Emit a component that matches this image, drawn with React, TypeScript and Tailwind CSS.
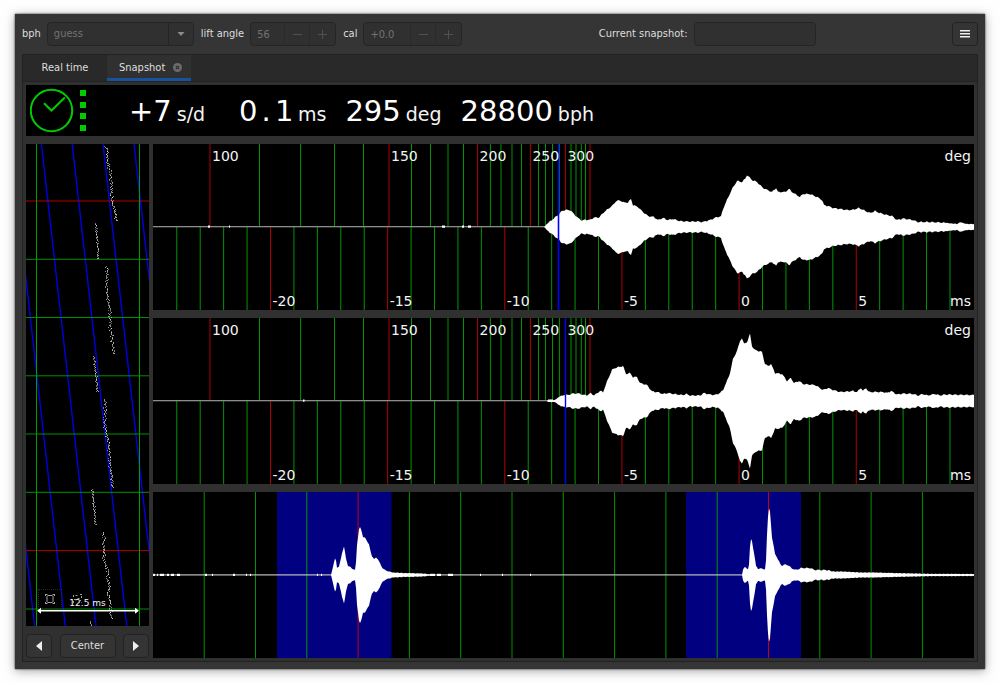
import React from "react";

type Point = [number, number];

const GREEN = "#009600";
const RED = "#b40000";
const CHART_W = 821;
const CHART_H = 166;
const MID = 83;
const ORIGIN = 153;

const degreeTicks: { x: number; label?: string; major?: boolean }[] = [
  { x: 210, label: "100", major: true },
  { x: 259.5 }, { x: 300.6 }, { x: 334.5 }, { x: 363.5 },
  { x: 389, label: "150", major: true },
  { x: 411.5 }, { x: 430.5 }, { x: 448 }, { x: 463.5 },
  { x: 477.6, label: "200", major: true },
  { x: 490.4 }, { x: 501 }, { x: 512 }, { x: 521.5 },
  { x: 530.4, label: "250", major: true },
  { x: 538.5 }, { x: 545.5 }, { x: 552.5 }, { x: 559.4 },
  { x: 565.4, label: "300", major: true },
  { x: 571 }, { x: 576 }, { x: 581.3 }, { x: 585.5 },
  { x: 590, major: true },
];

const msTicks = Array.from({ length: 34 }, (_, i) => {
  const ms = i - 24;
  return { ms, x: 739.1 + ms * 23.43, major: ms % 5 === 0 };
});

const tickEnvelope: Point[] = [
  [544, 0], [547, 3], [553, 8], [558, 12], [562, 16], [565, 17], [570, 17], [574, 13], [578, 9], [582, 6.5],
  [585, 7.3], [590, 7], [594, 9.5], [599, 9.5], [603, 14], [608, 18], [613, 22], [616, 26], [620, 26.5],
  [624, 24.5], [628, 24.5], [631, 28], [633, 22], [638, 20], [643, 15], [648, 11], [654, 10], [658, 7],
  [663, 9], [668, 7], [673, 8], [680, 6], [687, 5.5], [697, 5.5], [703, 5], [710, 7], [717, 10], [721, 10.5],
  [723, 18], [727, 27], [732, 38], [737, 46], [742, 45], [745, 48], [747, 52], [752, 47], [757, 45],
  [763, 39], [772, 35], [776, 39], [778, 35], [785, 35], [789, 38], [792, 35], [800, 30], [803, 33],
  [810, 33], [817, 30], [822, 27], [824, 22], [828, 21], [833, 19], [847, 17], [852, 17], [859, 19],
  [870, 14], [875, 16], [880, 14], [887, 12], [892, 11], [897, 7], [903, 8.5], [913, 7], [918, 5],
  [927, 5], [940, 4.5], [947, 4], [957, 3], [960, 4.5], [967, 3], [974, 3],
];

const tockEnvelope: Point[] = [
  [547, 0], [548, 1], [555, 1], [558, 3.5], [565, 6.5], [568, 6], [573, 7.5], [580, 7.5], [583, 6], [588, 6],
  [591, 8], [594, 5.5], [600, 10], [603, 9], [605, 14], [608, 22], [612, 31], [615, 33], [623, 35], [626, 27],
  [630, 28], [633, 24], [637, 24], [640, 18], [647, 16], [652, 9.5], [657, 9], [663, 7], [668, 8], [677, 6.5],
  [683, 6], [686, 7], [690, 5.5], [700, 5.5], [704, 8], [710, 6.5], [715, 6], [720, 8], [723, 11], [727, 20],
  [730, 28], [733, 42], [736, 48], [738, 53], [740, 60], [742, 63], [744, 57], [747, 59], [750, 67],
  [752, 55], [755, 51], [762, 49], [765, 37], [768, 35], [771, 37], [775, 28], [782, 27], [787, 20],
  [791, 23], [794, 18], [799, 20], [803, 17], [815, 16], [823, 11], [828, 13], [833, 11], [840, 9],
  [853, 10], [857, 9], [861, 13], [863, 10], [866, 13], [869, 9], [883, 9], [887, 8], [891, 10], [897, 6.5],
  [903, 7.5], [913, 7], [918, 5.5], [923, 7], [927, 5.5], [935, 7], [940, 5.5], [945, 6.5], [974, 6],
];

const beatEnvelopes: Point[][] = [
  [
    [331, 0], [333, 8], [335, 17], [336, 15], [337, 7], [339, 8], [342, 22], [344, 28], [346, 17], [348, 9],
    [355, 5], [356, 12], [357, 30], [359, 46], [360, 48], [362, 42], [363, 38], [365, 38], [367, 33],
    [369, 31], [372, 18], [374, 16], [376, 18], [380, 12], [383, 6], [387, 4], [393, 2.5], [403, 2],
    [423, 1.5], [430, 0.6],
  ],
  [
    [742, 0], [743, 5], [745, 8], [748, 6], [749, 10], [750, 28], [751, 36], [752, 34], [754, 22], [756, 9],
    [758, 6.5], [765, 6], [766, 14], [767, 40], [768, 58], [769, 67], [770, 64], [771, 50], [772, 37],
    [775, 22], [778, 15], [782, 9], [786, 11], [790, 8], [795, 5], [802, 7], [810, 7], [815, 5], [827, 5],
    [833, 3.5], [843, 3.5], [860, 2.5], [873, 2.5], [900, 1.8], [927, 1.2], [974, 1],
  ],
];

function heightAt(points: Point[], x: number): number {
  for (let i = 1; i < points.length; i++) {
    const [x0, h0] = points[i - 1];
    const [x1, h1] = points[i];
    if (x <= x1) return h0 + ((h1 - h0) * (x - x0)) / (x1 - x0);
  }
  return points[points.length - 1][1];
}

/** Closed outline mirrored about the centre line, with a fine ripple on its edge. */
function wavePath(points: Point[], ripple: number): string {
  const top: string[] = [];
  const bottom: string[] = [];
  const end = points[points.length - 1][0];
  for (let x = points[0][0]; x <= end; x += 1) {
    const h = heightAt(points, x);
    const r = h > 4 ? ripple * (Math.sin(x * 1.1) + 0.4 * Math.sin(x * 2.3)) : ripple * 0.4 * Math.sin(x * 1.6);
    const y = Math.max(0, h + (h > 0.9 ? r : 0));
    top.push(`${x - ORIGIN},${(MID - y).toFixed(2)}`);
    bottom.unshift(`${x - ORIGIN},${(MID + y).toFixed(2)}`);
  }
  return `M${top.join("L")}L${bottom.join("L")}Z`;
}

function BeatChart({ name, envelope, marker, markerWidth, specks }: {
  name: string;
  envelope: Point[];
  marker: number;
  markerWidth: number;
  specks: Point[];
}) {
  return (
    <section aria-label={name} className="relative flex min-h-32 flex-1 flex-col overflow-hidden bg-black text-sm leading-4 text-gray-100">
      <svg className="h-0 min-h-0 w-full flex-1" viewBox={`0 0 ${CHART_W} ${CHART_H}`} preserveAspectRatio="none" aria-hidden="true">
        {degreeTicks.map((t) => (
          <line key={t.x} x1={t.x - ORIGIN} x2={t.x - ORIGIN} y1={0} y2={MID} stroke={t.major ? RED : GREEN} />
        ))}
        {msTicks.map((t) => (
          <line key={t.ms} x1={t.x - ORIGIN} x2={t.x - ORIGIN} y1={MID} y2={CHART_H} stroke={t.major ? RED : GREEN} />
        ))}
        <rect x={0} y={MID - 1} width={CHART_W} height={1.3} fill="#8c8c8c" />
        {specks.map(([x, w]) => (
          <rect key={x} x={x - ORIGIN} y={MID - 1.5} width={w} height={2.2} fill="#fff" />
        ))}
        <path d={wavePath(envelope, 0.5)} fill="#fff" />
        <rect x={marker - ORIGIN - markerWidth / 2} y={0} width={markerWidth} height={CHART_H} fill="#0000ff" />
      </svg>
      {degreeTicks.filter((t) => t.label).map((t) => (
        <span key={t.label} className="absolute top-1 pl-0.5" style={{ left: `${((t.x - ORIGIN) / CHART_W) * 100}%` }}>{t.label}</span>
      ))}
      {msTicks.filter((t) => t.major).map((t) => (
        <span key={t.ms} className="absolute bottom-px pl-0.5" style={{ left: `${((t.x - ORIGIN) / CHART_W) * 100}%` }}>{t.ms}</span>
      ))}
      <span className="absolute top-1 right-[3px]">deg</span>
      <span className="absolute right-[3px] bottom-px">ms</span>
    </section>
  );
}

const periodTicks = Array.from({ length: 15 }, (_, i) => 204.2 + i * 51.3);

function PeriodChart() {
  const specks: Point[] = [
    [153, 2], [157, 1], [160, 4], [167, 2], [171, 3], [177, 3], [205, 2], [212, 1], [233, 2], [246, 1], [250, 1],
    [317, 1], [321, 1], [430, 5], [437, 4], [448, 5], [480, 1], [502, 1], [530, 1],
  ];
  return (
    <section aria-label="Full period" className="flex min-h-32 flex-1 flex-col bg-black">
      <svg className="h-0 min-h-0 w-full flex-1" viewBox={`0 0 ${CHART_W} ${CHART_H}`} preserveAspectRatio="none" aria-hidden="true">
        <rect x={124} y={0} width={114.5} height={CHART_H} fill="#000080" />
        <rect x={533} y={0} width={115} height={CHART_H} fill="#000080" />
        {periodTicks.map((x, i) => (
          <line key={x} x1={x - ORIGIN} x2={x - ORIGIN} y1={0} y2={CHART_H} stroke={i === 3 || i === 11 ? "#c00018" : GREEN} />
        ))}
        <rect x={0} y={MID - 0.7} width={CHART_W} height={1.2} fill="#c0c0c0" />
        {specks.map(([x, w]) => (
          <rect key={x} x={x - ORIGIN} y={MID - 1.2} width={w} height={2.2} fill="#fff" />
        ))}
        {beatEnvelopes.map((e, i) => <path key={i} d={wavePath(e, 0.5)} fill="#fff" />)}
      </svg>
    </section>
  );
}

const traces: Point[][] = [
  [[106, 146], [107, 163], [110, 172], [111, 195], [113, 206], [116, 221]],
  [[95, 223], [98, 259]],
  [[106, 266], [106, 294], [109, 308], [110, 330], [114, 354]],
  [[93, 356], [97, 392]],
  [[104, 399], [104, 425], [108, 443], [109, 465], [112, 487]],
  [[92, 489], [95, 525]],
  [[103, 532], [103, 557], [107, 572], [108, 595], [111, 619]],
  [[90, 621], [91, 626]],
];

function traceDots() {
  let seed = 7;
  const rand = () => {
    seed = (seed * 16807) % 2147483647;
    return seed / 2147483647;
  };
  const dots: { x: number; y: number; o: number }[] = [];
  for (const trace of traces) {
    for (let i = 1; i < trace.length; i++) {
      const [x0, y0] = trace[i - 1];
      const [x1, y1] = trace[i];
      for (let y = y0; y < y1; y += 0.75) {
        const spread = trace.length > 2 ? 3.6 : 2.2;
        const x = x0 + ((x1 - x0) * (y - y0)) / (y1 - y0) + (rand() - 0.4) * spread * (0.4 + rand() * 0.7);
        dots.push({ x: Math.round(x) - 26, y: Math.round(y) - 144, o: 0.35 + rand() * 0.35 });
      }
    }
  }
  return dots;
}

const dots = traceDots();

function PaperStrip() {
  return (
    <section aria-label="Trace" className="relative flex min-h-64 flex-1 flex-col overflow-hidden bg-black">
      <svg className="h-0 min-h-0 w-full flex-1" viewBox="0 0 123 482" preserveAspectRatio="none" aria-hidden="true">
        {[-20, 10.7, 41.4, 72.2, 103, 134].map((x) => (
          <line key={x} x1={x - 26} y1={0} x2={x + 28.6} y2={482} stroke="#0000e0" strokeWidth={1.4} />
        ))}
        {[57, 115.3, 173.5, 231.8, 290, 348.3, 406.6, 465].map((y, i) => (
          <line key={y} x1={0} x2={123} y1={y} y2={y} stroke={i % 6 === 0 ? "#b00000" : "#009000"} />
        ))}
        <path d="M10.5 0V482M113.5 0V482" stroke="#009c00" />
        {dots.map((d, i) => <rect key={i} x={d.x} y={d.y} width={1} height={1} fill="#fff" opacity={d.o} />)}
        <path d="M14 466.7H110" stroke="#fff" strokeWidth={1.6} />
        <path d="M11 466.7L15 463.7V469.7ZM113 466.7L109 463.7V469.7Z" fill="#fff" />
      </svg>
      <span className="absolute inset-x-0 bottom-[15px] text-center text-[9px] leading-4 text-gray-100">12.5 ms</span>
      <button type="button" aria-label="Fit view" className="absolute bottom-[17px] left-3 grid h-5 w-6 place-items-center border border-dotted border-neutral-800 text-neutral-400">
        <svg width="10" height="10" viewBox="0 0 10 10" fill="none" stroke="currentColor" aria-hidden="true">
          <path d="M2.5 1.5H7.5M2.5 8.5H7.5M2 2V8M8 2V8M0 .5H2.5M.5 0V2M7.5 .5H10M9.5 0V2M10 9.5H7.5M9.5 10V8M0 9.5H2.5M.5 10V8" />
        </svg>
      </button>
      <svg className="absolute bottom-[22px] left-[46px] text-neutral-400" width="11" height="10" viewBox="0 0 11 10" fill="none" stroke="currentColor" aria-hidden="true">
        <path d="M1.5 3V.5M3.5 1.5H6M8 .5H10.5M9.5 2V4M2 5.5H4M5.5 4.5H8M1.5 7V9.5M6 8.5H9.5M7.5 6.5H9" strokeDasharray="2 1" />
      </svg>
    </section>
  );
}

const field = "rounded border border-[#252525] bg-[#303030]";

function SpinField({ id, label, value, inputClass }: { id: string; label: string; value: string; inputClass: string }) {
  return (
    <div className="flex items-center gap-1.5">
      <label htmlFor={id}>{label}</label>
      <div className={`flex h-6 ${field} text-neutral-500`}>
        <input id={id} value={value} disabled readOnly className={`h-full bg-transparent pl-1.5 ${inputClass}`} />
        <button type="button" disabled aria-label={`Decrease ${label}`} className="grid h-full w-[25px] place-items-center border-l border-[#2a2a2a] text-[#505050]">
          <svg width="9" height="9" viewBox="0 0 9 9" stroke="currentColor" aria-hidden="true"><path d="M0 4.5H9" /></svg>
        </button>
        <button type="button" disabled aria-label={`Increase ${label}`} className="grid h-full w-[26px] place-items-center border-l border-[#2a2a2a] text-[#505050]">
          <svg width="9" height="9" viewBox="0 0 9 9" stroke="currentColor" aria-hidden="true"><path d="M0 4.5H9M4.5 0V9" /></svg>
        </button>
      </div>
    </div>
  );
}

const pushButton = "grid h-6 place-items-center rounded border border-[#222222] bg-[#343434]";

function Reading({ children, unit }: { children: React.ReactNode; unit: string }) {
  return (
    <p className="flex items-baseline gap-[5px]">
      <span className="text-[29px] leading-10 text-white">{children}</span>
      <span className="text-[19px]">{unit}</span>
    </p>
  );
}

export default function App() {
  return (
    <div className="flex min-h-screen flex-col bg-[#fefefe] px-[15px] pt-[14px] pb-[15px] font-['DejaVu_Sans','Noto_Sans',sans-serif]">
      <main className="flex flex-1 flex-col bg-[#353535] px-[7px] pb-[7px] text-[#dedede] shadow-[0_0_2px_rgba(0,0,0,0.8),0_2px_10px_rgba(0,0,0,0.35)]">
        <header className="flex items-center justify-between py-2 font-['DejaVu_Sans_Condensed','DejaVu_Sans',sans-serif] text-[11px] leading-4">
          <div className="flex items-center gap-[7px]">
            <div className="flex items-center gap-1.5">
              <label htmlFor="bph">bph</label>
              <div className="relative h-6 w-[147px]">
                <select id="bph" disabled className={`size-full appearance-none pl-1.5 text-neutral-500 opacity-100 ${field}`}>
                  <option>guess</option>
                </select>
                <span className="pointer-events-none absolute inset-y-0 right-0 grid w-[26px] place-items-center border-l border-[#252525]">
                  <svg width="8" height="4" viewBox="0 0 8 4" fill="#8c8c8c" aria-hidden="true"><path d="M0.5 0H7.5L4 4Z" /></svg>
                </span>
              </div>
            </div>
            <SpinField id="lift" label="lift angle" value="56" inputClass="w-[33px]" />
            <SpinField id="cal" label="cal" value="+0.0" inputClass="w-[46px]" />
          </div>
          <div className="flex items-center gap-1.5">
            <label htmlFor="snapshot-name">Current snapshot:</label>
            <input id="snapshot-name" className={`h-6 w-[122px] px-1.5 ${field}`} />
          </div>
          <button type="button" aria-label="Menu" className={`w-[26px] ${pushButton}`}>
            <svg width="10" height="8" viewBox="0 0 10 8" fill="#eeeeee" aria-hidden="true">
              <path d="M0 0H10V1.5H0ZM0 3H10V4.5H0ZM0 6H10V7.5H0Z" />
            </svg>
          </button>
        </header>

        <div className="flex flex-1 flex-col border border-[#222222] bg-[#303030]">
          <div role="tablist" className="flex h-[27px] border-b border-[#222222] bg-[#292929] font-['DejaVu_Sans_Condensed','DejaVu_Sans',sans-serif] text-[11px] leading-4">
            <button type="button" role="tab" aria-selected="false" className="w-[84px] text-center">Real time</button>
            <div className="flex items-center gap-2 border-b-3 border-[#15539e] bg-[#303030] pt-0.5 pr-[9px] pl-3">
              <button type="button" role="tab" aria-selected="true">Snapshot</button>
              <button type="button" aria-label="Close snapshot">
                <svg width="9" height="9" viewBox="0 0 9 9" aria-hidden="true">
                  <circle cx="4.5" cy="4.5" r="4.5" fill="#6c6c6c" />
                  <path d="M2.8 2.8L6.2 6.2M6.2 2.8L2.8 6.2" stroke="#303030" strokeWidth="1.2" />
                </svg>
              </button>
            </div>
          </div>

          <div className="flex flex-1 flex-col gap-2 p-[3px]">
            <div className="flex h-[51px] items-center bg-black text-gray-100">
              <svg className="mr-[39px] ml-1 shrink-0" width="60" height="51" viewBox="0 0 60 51" fill="none" stroke="#00cc00" strokeWidth="2" aria-hidden="true">
                <circle cx="21.5" cy="25.5" r="20.7" />
                <path d="M14 18.3L21.5 25.5L34.8 12.5" />
                <path d="M50 5H56V11H50ZM50 17H56V23H50ZM50 28H56V34H50ZM50 40H56V46H50Z" fill="#00cc00" stroke="none" />
              </svg>
              <div className="flex items-baseline gap-[19px] whitespace-nowrap">
                <div className="w-[91px]"><Reading unit="s/d">+7</Reading></div>
                <Reading unit="ms">
                  {"0.1".split("").map((c, i) => <span key={i} className="inline-block w-[18px] text-center">{c}</span>)}
                </Reading>
                <Reading unit="deg">295</Reading>
                <Reading unit="bph">28800</Reading>
              </div>
            </div>

            <div className="flex flex-1 gap-1">
              <div className="flex w-[123px] shrink-0 flex-col gap-2">
                <PaperStrip />
                <div className="flex justify-between font-['DejaVu_Sans_Condensed','DejaVu_Sans',sans-serif] text-[11px] leading-4">
                  <button type="button" aria-label="Shift left" className={`w-[26px] ${pushButton}`}>
                    <svg width="6" height="10" viewBox="0 0 6 10" fill="#eeeeee" aria-hidden="true"><path d="M6 0V10L0 5Z" /></svg>
                  </button>
                  <button type="button" className={`w-14 ${pushButton}`}>Center</button>
                  <button type="button" aria-label="Shift right" className={`w-[26px] ${pushButton}`}>
                    <svg width="6" height="10" viewBox="0 0 6 10" fill="#eeeeee" aria-hidden="true"><path d="M0 0V10L6 5Z" /></svg>
                  </button>
                </div>
              </div>
              <div className="flex min-w-0 flex-1 flex-col gap-2">
                <BeatChart name="Tick" envelope={tickEnvelope} marker={558.5} markerWidth={1.6}
                  specks={[[208, 2], [229, 1], [442, 3], [462, 2], [468, 3]]} />
                <BeatChart name="Tock" envelope={tockEnvelope} marker={565.5} markerWidth={1.4} specks={[[303, 1.5], [548, 5]]} />
                <PeriodChart />
              </div>
            </div>
          </div>
        </div>
      </main>
    </div>
  );
}
